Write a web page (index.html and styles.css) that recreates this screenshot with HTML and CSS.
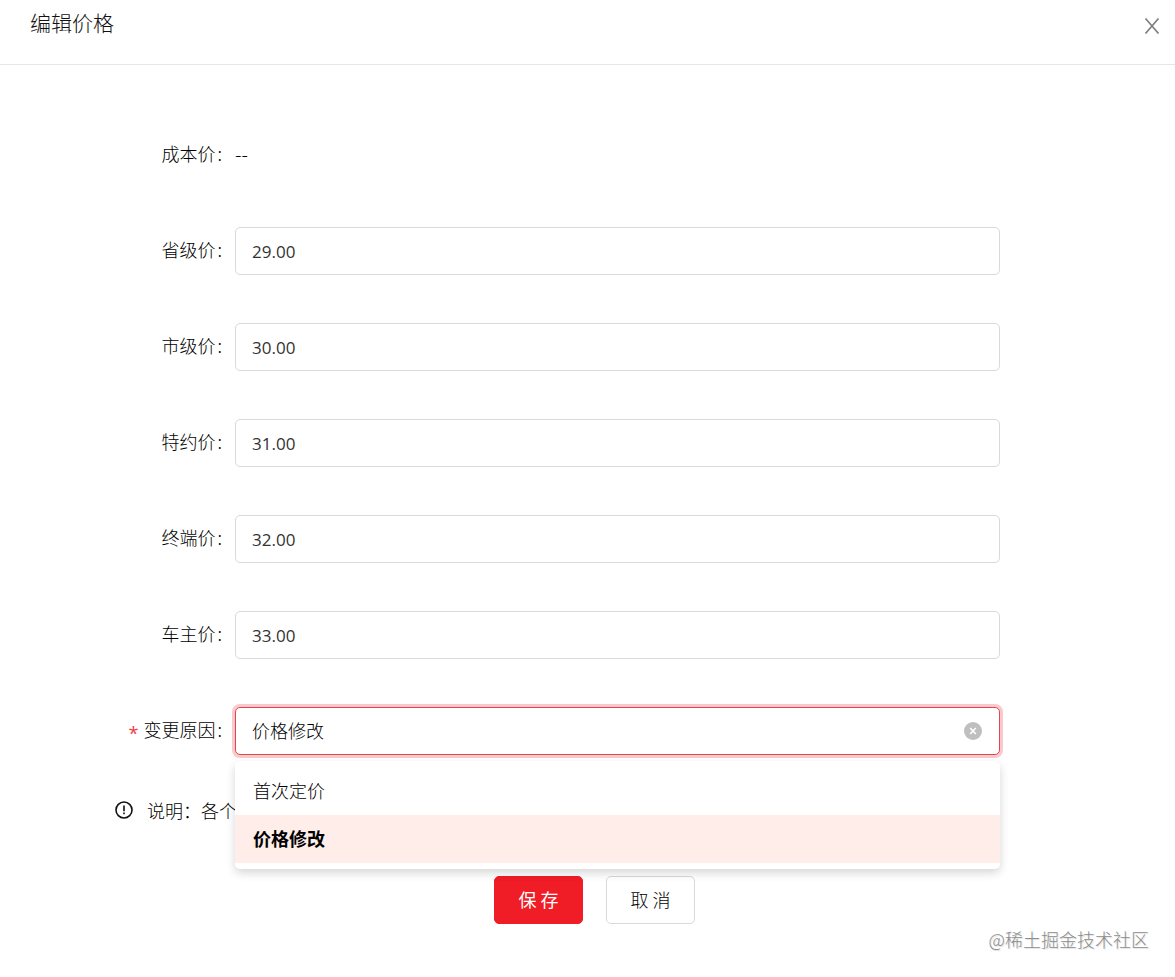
FILE: index.html
```html
<!DOCTYPE html>
<html lang="zh-CN">
<head>
  <meta charset="UTF-8" />
  <meta name="viewport" content="width=device-width, initial-scale=1" />
  <title>编辑价格</title>
  <link rel="stylesheet" href="styles.css">
</head>
<body>
  <header class="modal-header">
    <h1 class="modal-title">编辑价格</h1>
    <button type="button" class="modal-close" aria-label="关闭">
      <svg viewBox="0 0 16 16" width="16" height="16"><path d="M1.5 0.5L14.5 15.5M14.5 0.5L1.5 15.5" /></svg>
    </button>
  </header>

  <form class="price-form">
    <div class="form-item">
      <span class="label">成本价<i>:</i></span>
      <span class="text">--</span>
    </div>
    <div class="form-item">
      <label class="label" for="province">省级价<i>:</i></label>
      <input type="text" class="field" id="province" value="29.00" />
    </div>
    <div class="form-item">
      <label class="label" for="city">市级价<i>:</i></label>
      <input type="text" class="field" id="city" value="30.00" />
    </div>
    <div class="form-item">
      <label class="label" for="special">特约价<i>:</i></label>
      <input type="text" class="field" id="special" value="31.00" />
    </div>
    <div class="form-item">
      <label class="label" for="terminal">终端价<i>:</i></label>
      <input type="text" class="field" id="terminal" value="32.00" />
    </div>
    <div class="form-item">
      <label class="label" for="owner">车主价<i>:</i></label>
      <input type="text" class="field" id="owner" value="33.00" />
    </div>
    <div class="form-item">
      <label class="label" for="reason"><span class="required">*</span>变更原因<i>:</i></label>
      <div class="select-box">
        <select class="field field-active" id="reason">
          <option>首次定价</option>
          <option selected>价格修改</option>
        </select>
        <button type="button" class="clear" aria-label="清除">
          <svg viewBox="0 0 18 18" width="18" height="18"><circle cx="9" cy="9" r="9" /><path d="M6.2 6L11.8 12M11.8 6L6.2 12" /></svg>
        </button>
        <ul class="dropdown">
          <li>首次定价</li>
          <li class="selected">价格修改</li>
        </ul>
      </div>
    </div>

    <p class="note">
      <svg viewBox="0 0 18 18" width="18" height="18"><circle cx="9" cy="9" r="8" /><path d="M9 4.5V10.2M9 11.6V13.2" /></svg>
      <span>说明：各个</span>
    </p>

    <div class="actions">
      <button type="submit" class="btn btn-primary">保 存</button>
      <button type="button" class="btn">取 消</button>
    </div>
  </form>

  <footer class="watermark">@稀土掘金技术社区</footer>
</body>
</html>
```
FILE: styles.css
```css
* {
  box-sizing: border-box;
}
body {
  margin: 0;
  background: #fff;
  color: #000;
  font-family: 'Noto Sans CJK SC', sans-serif;
  font-size: 18px;
  font-weight: 300;
  line-height: 28px;
}
button, input, select {
  font: inherit;
  color: inherit;
}
.modal-header {
  display: flex;
  justify-content: space-between;
  align-items: flex-start;
  height: 65px;
  padding: 8px 15px 0 30px;
  border-bottom: 1px solid #e6e6e6;
}
.modal-title {
  margin: 0;
  font-size: 21px;
  font-weight: 300;
  color: #111;
}
.modal-close {
  display: flex;
  padding: 10px 0;
  border: 0;
  background: none;
  cursor: pointer;
}
.modal-close svg {
  fill: none;
  stroke: #808080;
  stroke-width: 1.7;
}
.price-form {
  padding-top: 66px;
}
.form-item {
  display: grid;
  grid-template-columns: 235px 1fr;
  align-items: center;
  min-height: 48px;
  margin-bottom: 48px;
  padding-right: 175px;
}
.label {
  padding: 0 13px 4px 0;
  text-align: right;
}
.label i {
  margin-left: 2px;
  font-style: normal;
}
.required {
  margin-right: 5px;
  color: #f03c46;
  font-family: 'Open Sans', sans-serif;
  font-weight: 400;
  line-height: 1;
  vertical-align: -3px;
}
.text, .field {
  font-family: 'Open Sans', 'Noto Sans CJK SC', sans-serif;
  font-size: 17px;
}
.text {
  font-size: 20px;
}
.field {
  display: block;
  width: 100%;
  height: 48px;
  padding: 0 16px;
  border: 1px solid #d9d9d9;
  border-radius: 5px;
  background: #fff;
  outline: none;
}
input.field {
  color: #333;
  font-weight: 400;
}
.select-box {
  position: relative;
}
select.field {
  appearance: none;
  padding-bottom: 2px;
  font-family: 'Noto Sans CJK SC', sans-serif;
  font-size: 18px;
}
.field-active {
  border-color: #e0474d;
  box-shadow: 0 0 0 3px #fbc8cb;
}
.clear {
  position: absolute;
  top: 15px;
  right: 18px;
  display: flex;
  padding: 0;
  border: 0;
  background: none;
  cursor: pointer;
}
.clear circle {
  fill: #bfbfbf;
}
.clear path {
  stroke: #fff;
  stroke-width: 1.6;
}
.dropdown {
  position: absolute;
  top: 54px;
  left: 0;
  right: 0;
  z-index: 10;
  margin: 0;
  padding: 6px 0;
  list-style: none;
  background: #fff;
  border-radius: 5px;
  box-shadow: 0 4px 10px rgba(0, 0, 0, 0.16);
}
.dropdown li {
  padding: 9px 18px 11px;
  cursor: pointer;
}
.dropdown .selected {
  background: #ffedea;
  font-weight: 700;
}
.note {
  display: flex;
  align-items: center;
  gap: 14px;
  margin: -7px 0 52px;
  padding-left: 115px;
}
.note svg {
  fill: none;
  stroke: #111;
  stroke-width: 1.6;
}
.actions {
  display: flex;
  justify-content: center;
  gap: 23px;
  padding-left: 14px;
}
.btn {
  min-width: 89px;
  height: 48px;
  padding: 0 23px 2px;
  border: 1px solid #d9d9d9;
  border-radius: 5px;
  background: #fff;
  cursor: pointer;
}
.btn-primary {
  border-color: #f01c26;
  background: #f01c26;
  color: #fff;
  font-weight: 400;
}
.watermark {
  padding: 1px 26px 0;
  text-align: right;
  color: #8c8c8c;
  text-shadow: 1px 1px 1px #ddd;
}
```
